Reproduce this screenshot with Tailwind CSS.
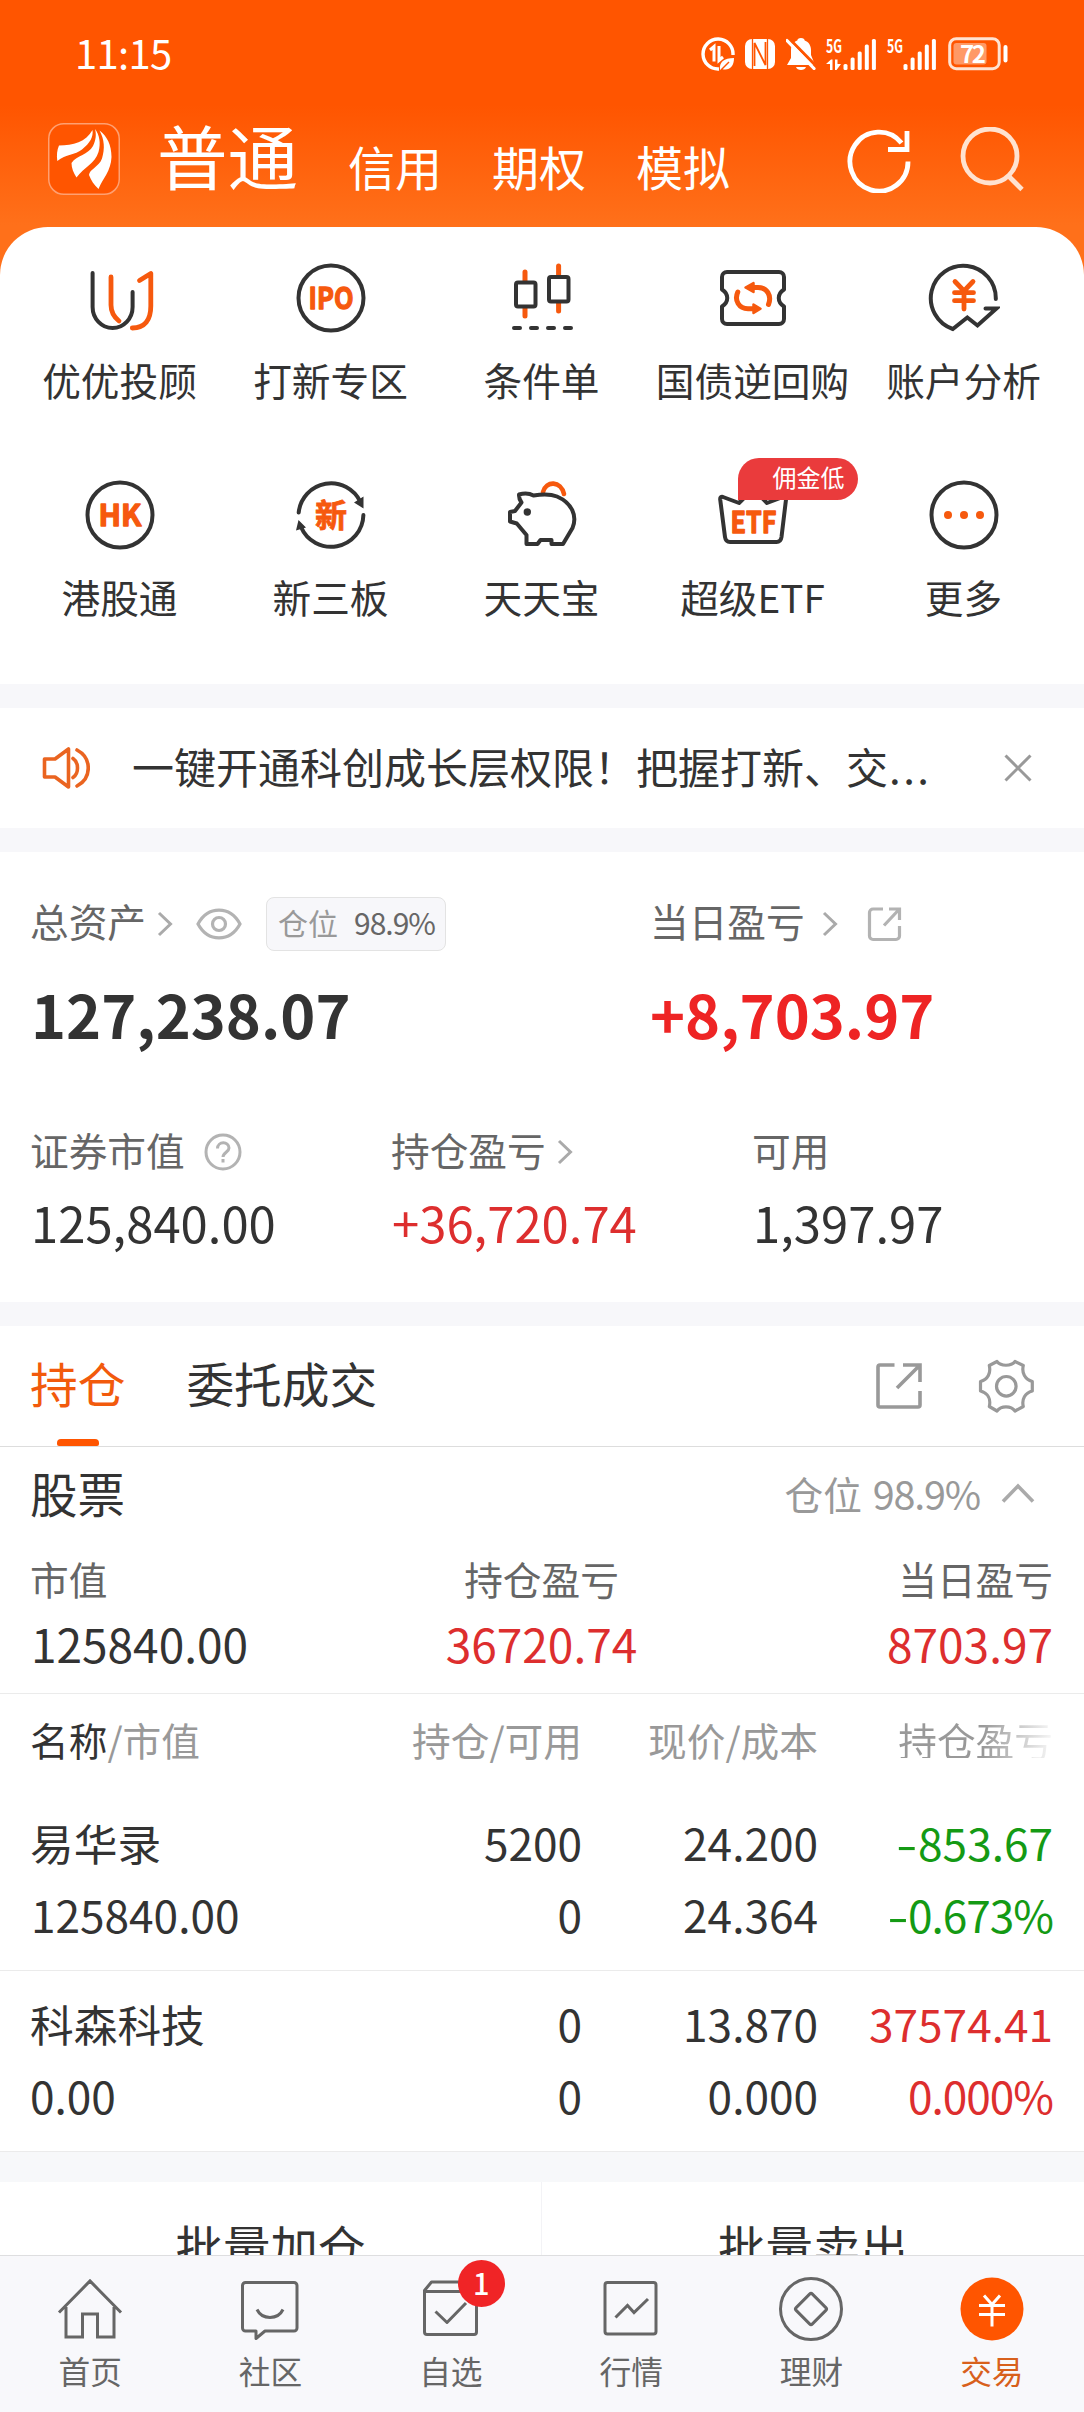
<!DOCTYPE html>
<html lang="zh-CN">
<head>
    <meta charset="UTF-8">
    <meta name="viewport" content="width=device-width, initial-scale=1.0">
    <script src="https://cdn.jsdelivr.net/npm/@tailwindcss/browser@4"></script>
    <title>交易</title>
</head>
<body class="bg-white">
<div class="flex flex-col w-[1084px] h-[2412px] overflow-hidden bg-white text-[#333] whitespace-nowrap font-['Noto_Sans_CJK_SC',sans-serif]">

    <!-- header + shortcuts -->
    <div class="shrink-0 bg-[linear-gradient(#ff5500_105px,#ff701a_225px)]">
        <!-- status bar -->
        <div class="flex items-center h-[108px] pl-[75px] pr-[76px] text-white">
            <div class="text-[40px] leading-[40px] tracking-[-0.7px] pb-[4px]">11:15</div>
            <svg class="ml-auto w-[34px] h-[34px]" viewBox="0 0 34 34" fill="none" stroke="#fff" stroke-width="3.4">
                <path d="M18 32A15 15 0 1 1 32 18"/>
                <path d="M9 13l4-3.500v15M18 9v14.500l4-3.500" stroke-width="3"/>
                <path d="M19 33c-1-8 4-12 14-12 0 9-5 13-12 11z" fill="#fff" stroke="none"/>
                <path d="M20 33l8-8" stroke="#ff5500" stroke-width="1.500"/>
            </svg>
            <svg class="ml-[10px] w-[30px] h-[30px]" viewBox="0 0 30 30">
                <rect width="30" height="30" rx="7" fill="#fff"/>
                <path d="M7.500 0v30M22.500 0v30" stroke="#ff5500" stroke-width="1.300"/>
                <path d="M9.500 27V4L20.500 26V3" fill="none" stroke="#ff5500" stroke-width="1.800"/>
            </svg>
            <svg class="ml-[11px] w-[30px] h-[32px]" viewBox="0 0 30 32">
                <path d="M15 0c2.500 0 3.500 1 3.700 2.500C23 4 25 8 25 12v5l4 10H1l4-7v-8c0-5 3-8.500 6.300-9.500C11.500 1 12.500 0 15 0zM10 29h10c-1 4-9 4-10 0z" fill="#fff"/>
                <path d="M3.500 1L30 28" stroke="#ff5500" stroke-width="3"/>
                <path d="M1 2.500L28 30.500" stroke="#fff" stroke-width="3.200" stroke-linecap="round"/>
            </svg>
            <svg class="ml-[10px] w-[50px] h-[33px] overflow-visible" viewBox="0 0 50 33" fill="#fff">
                <text x="0" y="14.500" font-size="18.500" font-weight="700" textLength="16" lengthAdjust="spacingAndGlyphs">5G</text>
                <path d="M0 26l5-4.500h1.500V32H4v-6zM9 21.500h2.500V26H15l-4.500 6H9z"/>
                <rect x="17.500" y="26" width="4" height="6" rx="1.500"/><rect x="24.600" y="19.500" width="4" height="12.500" rx="1.500"/><rect x="31.700" y="13.500" width="4" height="18.500" rx="1.500"/><rect x="38.800" y="6.500" width="4" height="25.500" rx="1.500"/><rect x="45.900" y="1" width="4" height="31" rx="1.500"/>
            </svg>
            <svg class="ml-[11px] w-[50px] h-[33px] overflow-visible" viewBox="0 0 50 33" fill="#fff">
                <text x="0" y="14.500" font-size="18.500" font-weight="700" textLength="16" lengthAdjust="spacingAndGlyphs">5G</text>
                <rect x="16.500" y="26" width="4" height="6" rx="1.500"/><rect x="23.600" y="19.500" width="4" height="12.500" rx="1.500"/><rect x="30.700" y="13.500" width="4" height="18.500" rx="1.500"/><rect x="37.800" y="6.500" width="4" height="25.500" rx="1.500"/><rect x="44.900" y="1" width="4" height="31" rx="1.500"/>
            </svg>
            <svg class="ml-[11px] w-[60px] h-[34px] overflow-visible" viewBox="0 0 60 34" fill="#fff">
                <rect x="1.700" y="1.700" width="49.500" height="30" rx="6.500" fill="none" stroke="#ffe3d2" stroke-width="3"/>
                <rect x="5.500" y="6" width="33" height="21.500" rx="3" fill-opacity=".4"/>
                <rect x="55.500" y="8" width="4" height="17.500" rx="2"/>
                <text x="12" y="25.500" font-size="24" font-weight="700" textLength="26">72</text>
            </svg>
        </div>
        <!-- account tabs -->
        <div class="flex h-[119px] pl-[48px] pr-[60px] text-white">
            <svg class="mt-[15px] w-[72px] h-[72px]" viewBox="0 0 72 72" fill="#fff">
                <rect x=".750" y=".750" width="70.500" height="70.500" rx="15" fill="#ff5500" stroke="#ffa071" stroke-width="1.500"/>
                <path d="M9.300 38C8.500 32 9 27 11 22.500 25 22.500 38 19 44.500 7 45.500 14 42 20 34 26.500 27 32 18 31 9.300 38z"/>
                <path d="M47 6c1.500 5 1 11-2 17-5 9-16 9-21.500 17 0 5 2 10 5 14.500C36 44 47 41 50.500 29 53 20 51.500 12 47 6z"/>
                <path d="M51.500 7.500c5 9 5.500 18 2.500 28C51 44 41.500 46 41 52c2 5 5 10 9.500 14C55 55 63 48 63.500 34 63.500 22 59 13 51.500 7.500z"/>
            </svg>
            <div class="ml-[37px] text-[70.5px] leading-[70px] pt-[11px]">普通</div>
            <div class="ml-[50px] flex gap-[50px] text-[47px] leading-[47px] pt-[34px]">
                <div>信用</div>
                <div>期权</div>
                <div>模拟</div>
            </div>
            <svg class="ml-auto mt-[19px] w-[64px] h-[66px]" viewBox="0 0 64 66" fill="none" stroke="#fff" stroke-width="4.800">
                <path d="M61 34.500A29 29.500 0 1 1 54.500 16"/>
                <path d="M60 4v18.500H41"/>
            </svg>
            <svg class="ml-[49px] mt-[19px] w-[64px] h-[66px]" viewBox="0 0 64 66" fill="none" stroke="#ffe2d0" stroke-width="4.800">
                <circle cx="30" cy="29" r="27"/>
                <path d="M48.500 49L62 62.500"/>
            </svg>
        </div>
        <!-- shortcut grid -->
        <div class="h-[457px] bg-white rounded-t-[48px] pl-[14px] pr-[15px] pt-[35px]">
            <div class="grid grid-cols-5 auto-rows-[217px] text-[38.7px] leading-[40px]">
                <div class="flex flex-col items-center gap-[25px]">
                    <svg class="w-[72px] h-[72px]" viewBox="0 0 72 72" fill="none" stroke="#333" stroke-width="4" stroke-linecap="round" stroke-linejoin="round">
                        <path d="M8.600 11V45a20 21 0 0 0 40 0V30"/>
                        <path d="M27 15V43c0 7 3 12 8 16M55.500 18.500L66.800 11.500V44c0 14-6 22-18.500 22" stroke="#f6590e" stroke-width="4.800"/>
                    </svg>
                    <div>优优投顾</div>
                </div>
                <div class="flex flex-col items-center gap-[25px]">
                    <svg class="w-[72px] h-[72px]" viewBox="0 0 72 72">
                        <circle cx="36" cy="36" r="32.500" fill="none" stroke="#333" stroke-width="4"/>
                        <text x="13.500" y="47" font-size="30" font-weight="700" textLength="45" lengthAdjust="spacingAndGlyphs" fill="#f6590e" stroke="#f6590e" stroke-width="1.300" stroke-linejoin="round">IPO</text>
                    </svg>
                    <div>打新专区</div>
                </div>
                <div class="flex flex-col items-center gap-[25px]">
                    <svg class="w-[72px] h-[72px]" viewBox="0 0 72 72" fill="none" stroke="#333" stroke-width="4" stroke-linecap="round">
                        <path d="M19 10V54M52.600 4V49" stroke="#f6590e" stroke-width="5"/>
                        <rect x="10" y="20.500" width="19.500" height="24" rx="2" fill="#fff"/>
                        <rect x="43" y="15" width="19.500" height="24.500" rx="2" fill="#fff"/>
                        <path d="M8 66h6M25 66h6M42 66h6M59 66h6"/>
                    </svg>
                    <div>条件单</div>
                </div>
                <div class="flex flex-col items-center gap-[25px]">
                    <svg class="w-[72px] h-[72px]" viewBox="0 0 72 72" fill="none" stroke="#333" stroke-width="4" stroke-linejoin="round">
                        <path d="M10 10H62a5 5 0 0 1 5 5V27.500C60 32 60 40 67 44.500V57a5 5 0 0 1-5 5H10a5 5 0 0 1-5-5V44.500C12 40 12 32 5 27.500V15a5 5 0 0 1 5-5z"/>
                        <path d="M36 25.500h5c9 0 14 8 10.500 17M36 46.700h-5C22 46.700 17 38.500 20.800 30" stroke="#f6590e" stroke-width="5" stroke-linecap="round"/>
                        <path d="M28.500 25.500l8-4.500v9zM43.500 46.700l-7-4.200v8.500z" fill="#f6590e" stroke="#f6590e" stroke-width="2.500"/>
                    </svg>
                    <div>国债逆回购</div>
                </div>
                <div class="flex flex-col items-center gap-[25px]">
                    <svg class="w-[72px] h-[72px]" viewBox="0 0 72 72" fill="none" stroke="#333" stroke-width="4" stroke-linecap="round">
                        <path d="M67.800 37A32.500 32.500 0 1 0 24.800 67L39.300 55.500 49.500 63.500 68.500 46.500H57.500"/>
                        <path d="M27 19.500l9 9.500 9-9.500M36 29V47M26.500 30.700h19M26.500 38.700h19" stroke="#f6590e" stroke-width="4.800"/>
                    </svg>
                    <div>账户分析</div>
                </div>
                <div class="flex flex-col items-center gap-[25px]">
                    <svg class="w-[72px] h-[72px]" viewBox="0 0 72 72">
                        <circle cx="36" cy="36" r="32.500" fill="none" stroke="#333" stroke-width="4"/>
                        <text x="14.500" y="47" font-size="30" font-weight="700" textLength="43" lengthAdjust="spacingAndGlyphs" fill="#f6590e" stroke="#f6590e" stroke-width="1.300" stroke-linejoin="round">HK</text>
                    </svg>
                    <div>港股通</div>
                </div>
                <div class="flex flex-col items-center gap-[25px]">
                    <svg class="w-[72px] h-[72px]" viewBox="0 0 72 72">
                        <path d="M3.700 33.500A32.500 32.500 0 0 1 65.500 23M68.400 36A32.500 32.500 0 0 1 6 48" fill="none" stroke="#333" stroke-width="4" stroke-linecap="round"/>
                        <path d="M59 23.500l9.500-6v12zM3.500 41l-2.500 10.500 10-3z" fill="#333"/>
                        <text x="20" y="47.500" font-size="32" font-weight="700" fill="#f6590e" stroke="#f6590e" stroke-width=".800">新</text>
                    </svg>
                    <div>新三板</div>
                </div>
                <div class="flex flex-col items-center gap-[25px]">
                    <svg class="w-[72px] h-[72px]" viewBox="0 0 72 72" fill="none" stroke="#333" stroke-width="4" stroke-linejoin="round">
                        <path d="M37 13C40 1.500 55 1.500 58 15" stroke="#f6590e" stroke-width="4.600" stroke-linecap="round"/>
                        <path d="M13 15.500C18 14 23 14 27.500 16.500 36 15 45 15 51 17.500 66 24 71.500 37 66.500 49L57 65H45.500V61H34.500L31.500 65H20.500V56L10.800 44.500 4 42.500V33L9 32 15.500 23.500C14 21.500 12.800 19 13 15.500z"/>
                        <circle cx="21.300" cy="33" r="3.700" fill="#333" stroke="none"/>
                    </svg>
                    <div>天天宝</div>
                </div>
                <div class="flex flex-col items-center gap-[25px]">
                    <div class="relative">
                        <svg class="w-[72px] h-[72px]" viewBox="0 0 72 72">
                            <path d="M22 24L6 18c-2-.500-3 .500-2.800 2.500L8 58c.500 3.500 2 5 5 5H59.500c3 0 4.500-1.500 5-5L69 20.500c.200-2-1-3-3-2.500L50 24 36 10z" fill="none" stroke="#333" stroke-width="4" stroke-linejoin="round"/>
                            <text x="13.500" y="53.500" font-size="30" font-weight="700" textLength="46" lengthAdjust="spacingAndGlyphs" fill="#f6590e" stroke="#f6590e" stroke-width="1.300" stroke-linejoin="round">ETF</text>
                        </svg>
                        <div class="absolute left-[21px] -top-[21px] w-[120px] h-[42px] pr-[13px] rounded-[21px] rounded-bl-none bg-[#ea3b3c] text-white text-[24px] leading-[38px] text-right">佣金低</div>
                    </div>
                    <div>超级ETF</div>
                </div>
                <div class="flex flex-col items-center gap-[25px]">
                    <svg class="w-[72px] h-[72px]" viewBox="0 0 72 72" fill="#f6590e">
                        <circle cx="36" cy="36" r="32.500" fill="none" stroke="#333" stroke-width="4"/>
                        <circle cx="20" cy="36" r="4"/><circle cx="36" cy="36" r="4"/><circle cx="52" cy="36" r="4"/>
                    </svg>
                    <div>更多</div>
                </div>
            </div>
        </div>
    </div>

    <!-- notice -->
    <div class="shrink-0 h-[168px] border-y-[24px] border-[#f7f7fa] flex items-center pl-[42px] pr-[52px]">
        <svg class="w-[48px] h-[42px]" viewBox="0 0 48 42" fill="none" stroke="#ea6420" stroke-width="3.600" stroke-linejoin="round">
            <path d="M2.500 12h10.500L26.500 2v38L13 30H2.500z"/>
            <path d="M31 11.500c6 4 6 15 0 19M35 3C50 11 50 31 35 39" stroke-linecap="round"/>
        </svg>
        <div class="ml-[42px] text-[42px] leading-[42px] pb-[4px]">一键开通科创成长层权限！把握打新、交<span class="tracking-[2.5px] ml-[1px]">...</span></div>
        <svg class="ml-auto w-[28px] h-[28px]" viewBox="0 0 28 28" stroke="#999" stroke-width="3">
            <path d="M1.500 1.500l25 25M26.500 1.500l-25 25"/>
        </svg>
    </div>

    <!-- assets -->
    <div class="shrink-0 h-[450px] pl-[30px] pr-[31px] pt-[45px]">
        <div class="grid grid-cols-[620px_1fr]">
            <div>
                <div class="flex items-center h-[54px] text-[38.7px] leading-[38px] text-[#666]">
                    <div class="pb-[8px]">总资产</div>
                    <svg class="ml-[11px] w-[16px] h-[26px]" viewBox="0 0 16 26" fill="none" stroke="#aaa" stroke-width="3"><path d="M2 2l11.500 11L2 24"/></svg>
                    <svg class="ml-[23px] w-[46px] h-[32px]" viewBox="0 0 46 32" fill="none" stroke="#b3b3b3" stroke-width="3.200">
                        <path d="M2 16C12-2.500 34-2.500 44 16 34 34.500 12 34.500 2 16z"/><circle cx="23" cy="16" r="6.500"/>
                    </svg>
                    <div class="ml-[24px] w-[180px] h-[54px] pl-[11px] pb-[5px] flex items-center gap-[16px] rounded-lg border border-[#e3e3e3] bg-[#f7f7fa] text-[30px]">
                        <span class="text-[#999]">仓位</span><span class="tracking-[-1px]">98.9%</span>
                    </div>
                </div>
                <div class="mt-[30px] ml-[1px] text-[59.5px] leading-[64px] font-bold">127,238.07</div>
            </div>
            <div>
                <div class="flex items-center h-[54px] text-[38.7px] leading-[38px] text-[#666]">
                    <div class="pb-[8px]">当日盈亏</div>
                    <svg class="ml-[17px] w-[16px] h-[26px]" viewBox="0 0 16 26" fill="none" stroke="#aaa" stroke-width="3"><path d="M2 2l11.500 11L2 24"/></svg>
                    <svg class="ml-[29px] w-[36px] h-[36px]" viewBox="0 0 36 36" fill="none" stroke="#b3b3b3" stroke-width="3.200">
                        <path d="M16 3H6a3.500 3.500 0 0 0-3.500 3.500V30A3.500 3.500 0 0 0 6 33.500H29a3.500 3.500 0 0 0 3.500-3.500V20M22 3H32.500V14M32 3.500L17 19.500"/>
                    </svg>
                </div>
                <div class="mt-[30px] text-[59.5px] leading-[64px] font-bold text-[#ee2424]">+8,703.97</div>
            </div>
        </div>
        <div class="mt-[87px] grid grid-cols-[361px_361px_1fr] text-[#666] text-[38.7px] leading-[38px]">
            <div class="flex items-center h-[40px]">
                <div class="pb-[6px]">证券市值</div>
                <svg class="ml-[19px] w-[38px] h-[38px]" viewBox="0 0 38 38" fill="none" stroke="#b3b3b3" stroke-width="3">
                    <circle cx="19" cy="19" r="17"/><path d="M13.500 15.500c0-7.500 11.500-7.500 11.500-.500 0 4-6 4.500-6 9"/><path d="M19 26v3.500"/>
                </svg>
            </div>
            <div class="flex items-center h-[40px]">
                <div class="pb-[6px]">持仓盈亏</div>
                <svg class="ml-[11px] w-[16px] h-[26px]" viewBox="0 0 16 26" fill="none" stroke="#aaa" stroke-width="3"><path d="M2 2l11.500 11L2 24"/></svg>
            </div>
            <div class="flex items-center h-[40px]">
                <div class="pb-[6px]">可用</div>
            </div>
        </div>
        <div class="mt-[25px] ml-[1px] grid grid-cols-[361px_361px_1fr] text-[49px] leading-[49px]">
            <div>125,840.00</div>
            <div class="text-[#dd2e2e]">+36,720.74</div>
            <div>1,397.97</div>
        </div>
    </div>

    <!-- tabs -->
    <div class="shrink-0 h-[145px] border-t-[24px] border-t-[#f7f7fa] border-b border-b-[#ddd] flex items-center pl-[30px] pr-[50px] text-[47.7px] leading-[47px]">
        <div class="relative h-full text-[#f25a0c] pt-[33px]">持仓
            <div class="absolute left-[27px] bottom-0 w-[42px] h-[7px] rounded-t-[4px] rounded-b-[2px] bg-[#ff5500]"></div>
        </div>
        <div class="ml-[61px] h-full pt-[33px]">委托成交</div>
        <svg class="ml-auto w-[48px] h-[48px]" viewBox="0 0 48 48" fill="none" stroke="#999" stroke-width="3.600">
            <path d="M19.500 3H5a2 2 0 0 0-2 2V43a2 2 0 0 0 2 2H43a2 2 0 0 0 2-2V29M28 3H45V20M44.500 3.500L22 26"/>
        </svg>
        <svg class="ml-[55px] w-[56px] h-[56px]" viewBox="-1 -1 56 56" fill="none" stroke="#999" stroke-width="3.200" stroke-linejoin="round">
            <path d="M10.300 6.500L18 2.500C22 7.500 32 7.500 36 2.500L44.300 6.500C42.500 14 46 20.500 53.300 22.500V32C46 34 42.500 40 44.300 47.500L36 52C32 46.500 22 46.500 18 52L10.300 47.500C12 40 9 34 1.500 32V22.500C9 20.500 12 14 10.300 6.500z"/>
            <circle cx="27.300" cy="27.300" r="9.800"/>
        </svg>
    </div>

    <!-- stock summary -->
    <div class="shrink-0 h-[247px] border-b border-[#ebebeb] pl-[30px] pr-[31px]">
        <div class="flex items-center justify-between h-[91px]">
            <div class="text-[47.5px] leading-[47px]">股票</div>
            <div class="flex items-center text-[#999] text-[38.7px] leading-[38px]">
                <span>仓位</span><span class="ml-[11px] tracking-[-1.2px] text-[39.5px]">98.9%</span>
                <svg class="ml-[21px] mr-[18px] w-[34px] h-[20px]" viewBox="0 0 34 20" fill="none" stroke="#aaa" stroke-width="3.600"><path d="M2 18.500L17 3l15 15.500"/></svg>
            </div>
        </div>
        <div class="grid grid-cols-3 pt-[21px] text-[#666] text-[38.7px] leading-[38px]">
            <div>市值</div>
            <div class="text-center">持仓盈亏</div>
            <div class="text-right">当日盈亏</div>
        </div>
        <div class="grid grid-cols-3 mt-[23px] text-[46px] leading-[46px]">
            <div class="pl-px">125840.00</div>
            <div class="text-center text-[#dd2e2e]">36720.74</div>
            <div class="text-right text-[#dd2e2e]">8703.97</div>
        </div>
    </div>

    <!-- holdings table -->
    <div class="shrink-0 h-[95px] pl-[30px] pr-[31px] grid grid-cols-[552px_236px_235px] items-center text-right text-[38.7px] leading-[38px] text-[#999] pb-[5px]">
        <div class="flex justify-between"><span><span class="text-[#333]">名称</span>/市值</span><span>持仓/可用</span></div>
        <div>现价/成本</div>
        <div class="text-transparent bg-clip-text bg-[linear-gradient(to_right,#999_165px,#fff_240px)]">持仓盈亏</div>
    </div>
    <div class="shrink-0 h-[182px] border-b border-[#ebebeb] pl-[30px] pr-[31px] pt-[28px] grid grid-cols-[275px_277px_236px_235px] auto-rows-[72px] text-right text-[44.2px] leading-[50px]">
        <div class="text-left text-[43.7px]">易华录</div>
        <div>5200</div>
        <div>24.200</div>
        <div class="text-[#149a14]"><span class="inline-block scale-x-140 mr-[4px]">-</span>853.67</div>
        <div class="text-left pl-px">125840.00</div>
        <div>0</div>
        <div>24.364</div>
        <div class="text-[#149a14] tracking-[-1px]"><span class="inline-block scale-x-140 mr-[4px]">-</span>0.673%</div>
    </div>
    <div class="shrink-0 h-[181px] border-b border-[#ebebeb] pl-[30px] pr-[31px] pt-[27px] grid grid-cols-[275px_277px_236px_235px] auto-rows-[72px] text-right text-[44.2px] leading-[50px]">
        <div class="text-left text-[43.7px]">科森科技</div>
        <div>0</div>
        <div>13.870</div>
        <div class="text-[#dd2e2e]">37574.41</div>
        <div class="text-left">0.00</div>
        <div>0</div>
        <div>0.000</div>
        <div class="text-[#dd2e2e] tracking-[-1px]">0.000%</div>
    </div>

    <!-- batch actions, cut off by the tab bar -->
    <div class="shrink-0 h-[103px] border-t-[30px] border-[#f7f8fa] grid grid-cols-2 overflow-hidden text-center text-[47.5px] leading-[48px]">
        <div class="pt-[40px] border-r border-[#f3f3f6]">批量加仓</div>
        <div class="pt-[40px]">批量卖出</div>
    </div>

    <!-- tab bar -->
    <div class="grow shrink-0 border-t border-[#dedee0] bg-[#f8f8fb] pt-[20px] pr-[2px] grid grid-cols-6 text-[31.7px] leading-[32px] text-[#666]">
        <div class="flex flex-col items-center gap-[12px]">
            <svg class="w-[66px] h-[66px]" viewBox="0 0 66 66" fill="none" stroke="#666" stroke-width="3">
                <path d="M2 36.500L33 5l31 31.500M9 31V61H25.500V38H40.500V61H57V31"/>
            </svg>
            <div>首页</div>
        </div>
        <div class="flex flex-col items-center gap-[12px]">
            <svg class="w-[66px] h-[66px]" viewBox="0 0 66 66" fill="none" stroke="#666" stroke-width="3" stroke-linejoin="round">
                <path d="M8.500 6.500H57a3 3 0 0 1 3 3V52a3 3 0 0 1-3 3H28l-9 7.500V55H8.500a3 3 0 0 1-3-3V9.500a3 3 0 0 1 3-3z"/>
                <path d="M20 33.500C25 44 41 44 46 33.500"/>
            </svg>
            <div>社区</div>
        </div>
        <div class="flex flex-col items-center gap-[12px]">
            <div class="relative">
                <svg class="w-[66px] h-[66px]" viewBox="0 0 66 66" fill="none" stroke="#666" stroke-width="3" stroke-linejoin="round">
                    <path d="M6.500 15.500H58.500V56a2.500 2.500 0 0 1-2.500 2.500H9A2.500 2.500 0 0 1 6.500 56V14.500L13.500 6H52L58.500 15"/>
                    <path d="M17.500 35.500L29 46.500 48 27"/>
                </svg>
                <div class="absolute left-[40px] -top-[16px] size-[47px] rounded-full bg-[#f02426] text-white text-[29px] leading-[44px] font-medium text-center">1</div>
            </div>
            <div>自选</div>
        </div>
        <div class="flex flex-col items-center gap-[12px]">
            <svg class="w-[66px] h-[66px]" viewBox="0 0 66 66" fill="none" stroke="#666" stroke-width="3">
                <rect x="7" y="6.500" width="51" height="51.500" rx="2.500"/>
                <path d="M17.500 41.500L29.500 29.500 36 36.500 50 23"/>
            </svg>
            <div>行情</div>
        </div>
        <div class="flex flex-col items-center gap-[12px]">
            <svg class="w-[66px] h-[66px]" viewBox="0 0 66 66" fill="none" stroke="#666" stroke-width="3">
                <circle cx="33" cy="33" r="30.500"/>
                <rect x="21.500" y="21.500" width="23" height="23" rx="2" transform="rotate(45 33 33)"/>
            </svg>
            <div>理财</div>
        </div>
        <div class="flex flex-col items-center gap-[12px]">
            <svg class="w-[66px] h-[66px]" viewBox="0 0 66 66" fill="none" stroke="#fff" stroke-width="3">
                <circle cx="33" cy="33" r="31.500" fill="#ff5500" stroke="none"/>
                <path d="M25 19.500l8 9 8-9M33 28V50.500M20 29.500H46M20 38.500H46"/>
            </svg>
            <div class="text-[#d8601c]">交易</div>
        </div>
    </div>
</div>
</body>
</html>
